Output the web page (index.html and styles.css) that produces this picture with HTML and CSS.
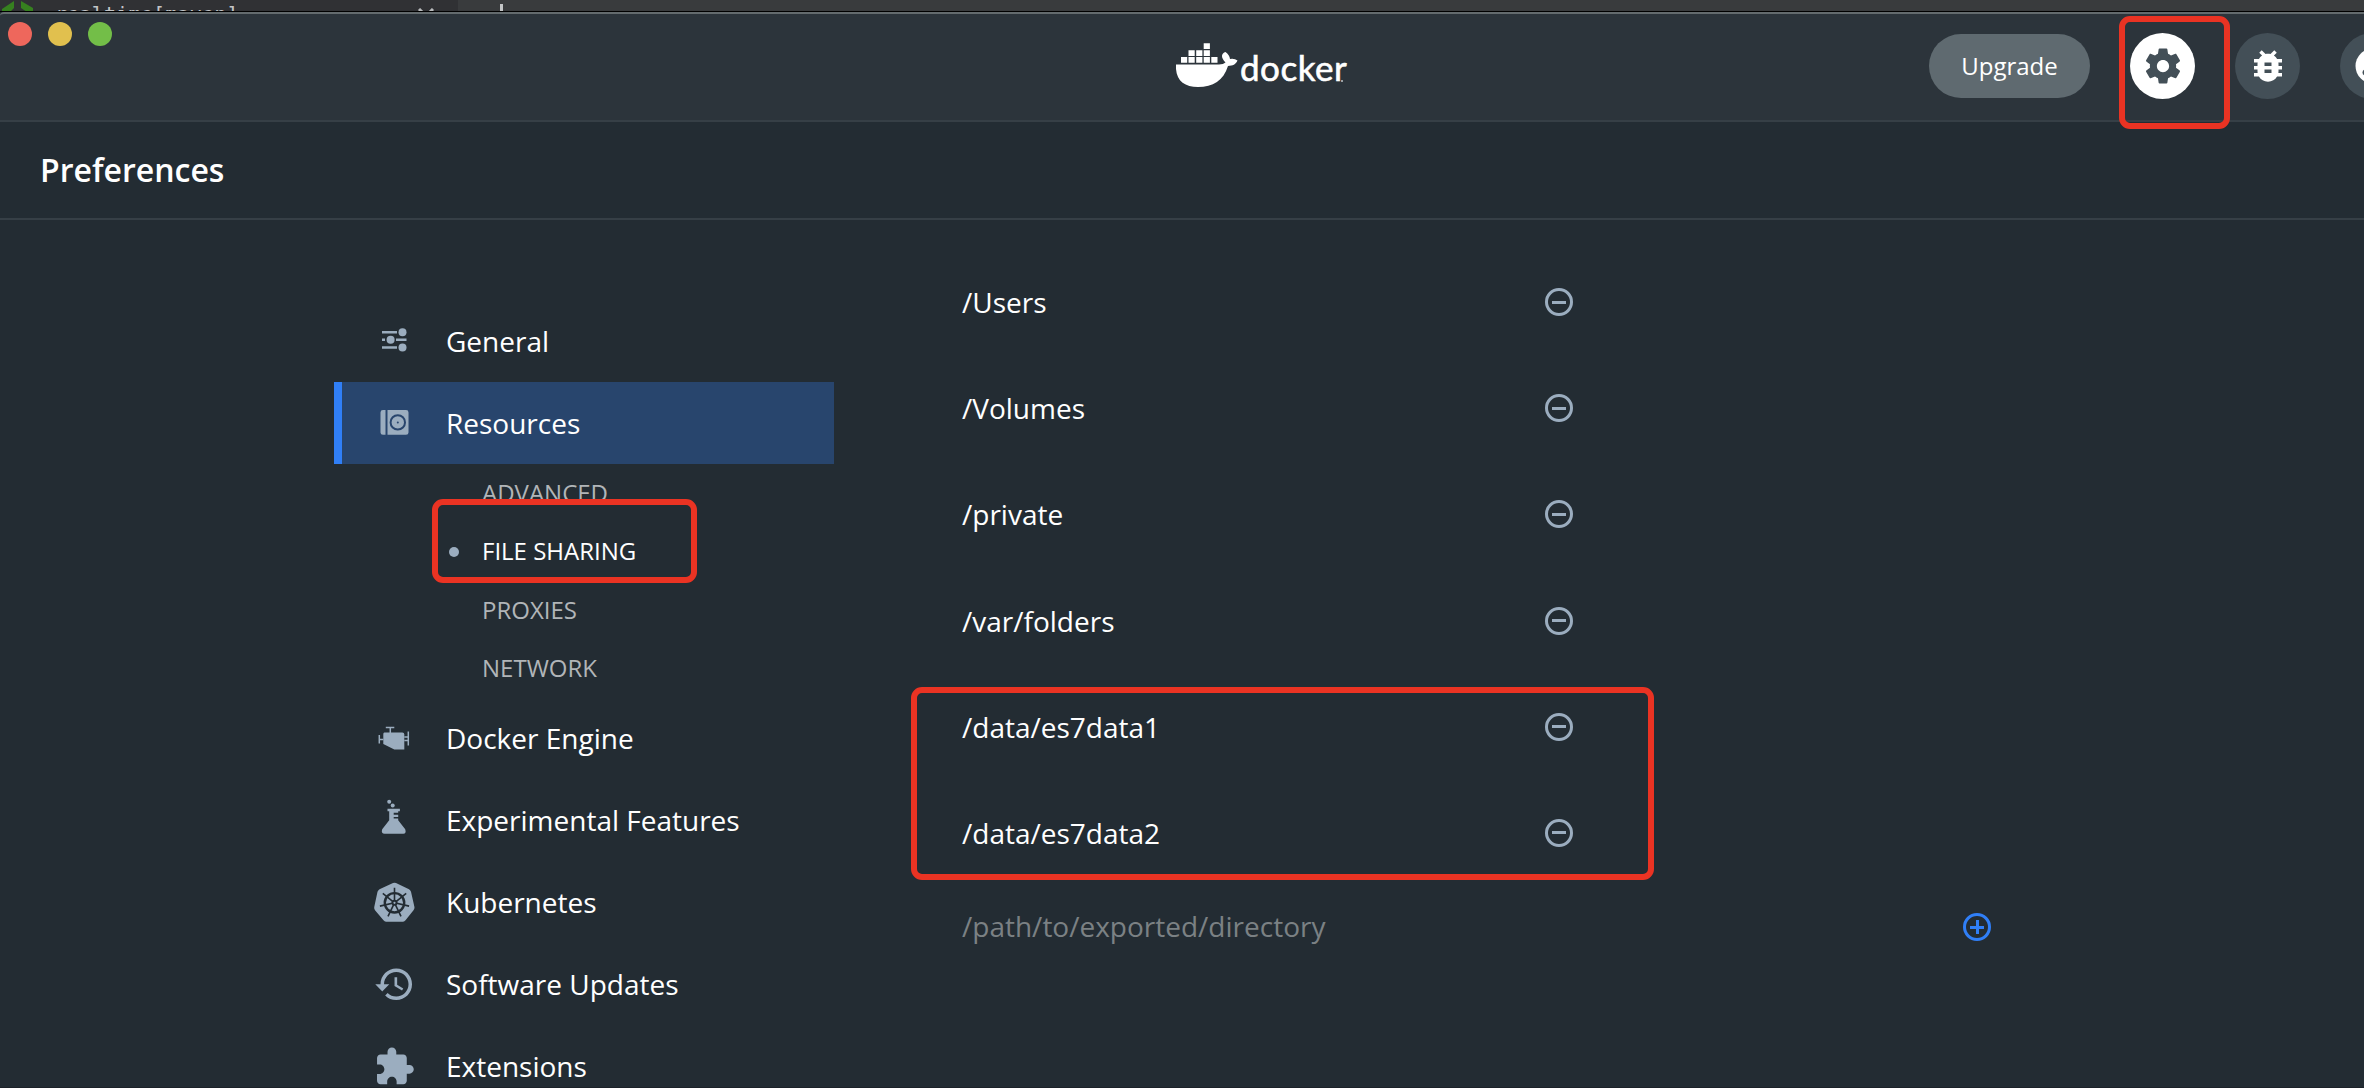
FILE: index.html
```html
<!DOCTYPE html>
<html lang="en">
<head>
<meta charset="utf-8">
<title>Docker Preferences</title>
<link rel="stylesheet" href="styles.css">
</head>
<body>
<div class="screen">
  <div class="backdrop">
    <div class="tab">
      <svg class="tab-leaf" width="34" height="12" viewBox="0 0 34 12"><path d="M1 9 13 1V8L9 12H1zM20 1 32 8V12H26L20 8z" fill="#36801f"/></svg>
      <span class="tab-name">realtime[maven]</span>
      <svg class="tab-close" width="16" height="16" viewBox="0 0 16 16"><path d="M1 1 15 15M15 1 1 15" stroke="#b9bbbd" stroke-width="3"/></svg>
    </div>
    <span class="tab-add"></span>
  </div>
  <header class="titlebar">
    <div class="lights"><i class="light red"></i><i class="light yellow"></i><i class="light green"></i></div>
    <div class="logo">
      <svg class="whale" width="62" height="45" viewBox="0 0 62 45"><g fill="#fff"><path d="M0 21.5H43Q47.500 21.500 49.500 19.500C46 16 45 12.500 47 10.500Q48 9 49.500 9Q53.500 12 54 16Q58.500 15.200 61.500 17.500C59.500 21.500 57 22.800 52 23C47.500 37.500 37 44 22 44C8 44-1 37 0 21.500z"/><path d="M5 14h6.200v5.800H5zM12.500 14h6.200v5.800h-6.200zM20.200 14h6.200v5.800h-6.200zM27.700 14h6.200v5.800h-6.200zM35.300 14h6.200v5.800h-6.200zM12.500 7.200h6.200V13h-6.200zM20.200 7.200h6.200V13h-6.200zM27.700 7.200h6.200V13h-6.200zM27.700.3h6.200V6h-6.200z"/></g></svg>
      <span class="wordmark">docker</span><span class="wordmark-dot"></span>
    </div>
    <div class="actions">
      <button class="upgrade">Upgrade</button>
      <button class="round active"><svg width="42" height="42" viewBox="0 0 24 24"><path fill="#434f57" d="M19.430 12.980c.040-.320.070-.640.070-.980s-.030-.660-.070-.980l2.110-1.650c.190-.150.240-.420.120-.640l-2-3.460c-.120-.220-.390-.300-.610-.220l-2.490 1c-.520-.400-1.080-.730-1.690-.980l-.380-2.650C14.460 2.180 14.250 2 14 2h-4c-.250 0-.460.180-.490.420l-.380 2.650c-.610.250-1.170.590-1.690.980l-2.490-1c-.230-.090-.490 0-.610.220l-2 3.460c-.130.220-.070.490.120.640l2.110 1.650c-.040.320-.070.650-.070.980s.030.660.070.980l-2.110 1.650c-.190.150-.240.420-.120.640l2 3.460c.120.220.390.300.610.220l2.490-1c.520.400 1.080.730 1.690.980l.380 2.650c.030.240.240.420.490.420h4c.250 0 .460-.180.490-.420l.380-2.650c.610-.250 1.170-.590 1.690-.980l2.490 1c.230.090.490 0 .610-.220l2-3.460c.120-.220.070-.490-.120-.640l-2.110-1.650zM12 15.500c-1.930 0-3.500-1.570-3.500-3.500s1.570-3.500 3.500-3.500 3.500 1.570 3.500 3.500-1.570 3.500-3.500 3.500z"/></svg></button>
      <button class="round"><svg width="42" height="42" viewBox="0 0 24 24"><path fill="#fff" d="M20 8h-2.810c-.450-.780-1.070-1.450-1.820-1.960L17 4.410 15.590 3l-2.170 2.170C12.960 5.060 12.490 5 12 5s-.960.060-1.410.170L8.410 3 7 4.410l1.620 1.630C7.880 6.550 7.260 7.220 6.810 8H4v2h2.090c-.050.330-.090.660-.090 1v1H4v2h2v1c0 .340.040.670.090 1H4v2h2.810c1.040 1.790 2.970 3 5.190 3s4.150-1.210 5.190-3H20v-2h-2.090c.050-.330.090-.660.090-1v-1h2v-2h-2v-1c0-.340-.040-.670-.090-1H20V8zm-6 8h-4v-2h4v2zm0-4h-4v-2h4v2z"/></svg></button>
      <button class="round"><svg width="42" height="42" viewBox="0 0 42 42"><circle cx="21" cy="21" r="17.500" fill="#fff"/><circle cx="13.500" cy="27.500" r="3" fill="#434f57"/></svg></button>
    </div>
  </header>
  <h1 class="title">Preferences</h1>
  <main class="content">
    <nav class="nav">
      <a class="item"><svg class="icon" width="42" height="42" viewBox="-2 -.500 42 42"><g fill="#9badbf"><path d="M7 10.500h15v2.600H7zM7 18h3v2.600H7zM21 18h10.500v2.600H21zM7 25.700h15v2.600H7z"/><circle cx="27.500" cy="11.700" r="4"/><circle cx="15.600" cy="19.300" r="4"/><circle cx="27.500" cy="26.900" r="4"/></g></svg><span>General</span></a>
      <a class="item selected"><svg class="icon" width="42" height="42" viewBox="-2 -.400 42 42"><path fill="#9badbf" d="M8 7.700H10.500V32.300H8Q5.500 32.300 5.500 30V10Q5.500 7.700 8 7.700zM12.500 7.700H31Q33.500 7.700 33.500 10V30Q33.500 32.300 31 32.300H12.500z"/><circle cx="22.800" cy="20" r="7.200" fill="none" stroke="#28456d" stroke-width="2"/><circle cx="22.800" cy="20" r="1" fill="#28456d"/></svg><span>Resources</span></a>
      <div class="sub">
        <a>ADVANCED</a>
        <a class="current">FILE SHARING</a>
        <a>PROXIES</a>
        <a>NETWORK</a>
      </div>
      <a class="item"><svg class="icon" width="42" height="42" viewBox="0 0 42 42"><g transform="translate(-1.700 3)"><path fill="#9badbf" d="M13 12.500H31Q33 12.500 33 14.500V29.500H23L12 24V14Q12 12.500 13 12.500z"/><path fill="none" stroke="#9badbf" stroke-width="1.500" d="M14.500 7.500H23M19 7.500V13M8 15V23.500M8 19.500H12M37 11.500V25.500M33 17H37M33 20.500H37"/></g></svg><span>Docker Engine</span></a>
      <a class="item"><svg class="icon" width="42" height="42" viewBox="0 0 42 42"><g fill="#9badbf" transform="translate(-.800 2.700)"><circle cx="17" cy="0" r="2"/><circle cx="20.500" cy="3.800" r="2"/><path d="M15.300 7H27.700V9.600H26V11H21.500V13H26V15.300H21.500V16.800H26V18.500L33 27.500Q34.500 31.800 31 32H12.500Q8.500 31.800 10 27.500L17 18.500V9.600H15.300z"/></g></svg><span>Experimental Features</span></a>
      <a class="item"><svg class="icon" width="42" height="42" viewBox="0 -1.300 42 42"><path fill="#9badbf" d="M20 .800Q21.500.200 23 .800L36 7Q37.600 8 38 9.500L41.500 25Q41.600 26.500 40.500 28L32.500 38Q31.500 39.300 30 39.400H13Q11.500 39.300 10.500 38L2 28Q1 26.500 1.200 25L4.500 9.500Q5 8 6.500 7z"/><g fill="none" stroke="#232c33" stroke-width="2"><circle cx="21.500" cy="20.500" r="9.700" stroke-width="2.400"/><path stroke-width="1.600" d="M21.500 20.500V5.500M21.500 20.500 9.800 11.100M21.500 20.500 33.200 11.100M21.500 20.500 6.900 23.800M21.500 20.500 36.100 23.800M21.500 20.500 15 34M21.500 20.500 28 34"/></g><circle cx="21.500" cy="20.500" r="3" fill="#232c33"/><circle cx="21.500" cy="20.500" r="1.100" fill="#9badbf"/></svg><span>Kubernetes</span></a>
      <a class="item"><svg class="icon" width="42" height="42" viewBox="0 0 24 24"><path transform="translate(.300 .200)" fill="#9badbf" d="M13 3c-4.970 0-9 4.030-9 9H1l3.890 3.890.070.140L9 12H6c0-3.870 3.130-7 7-7s7 3.130 7 7-3.130 7-7 7c-1.930 0-3.680-.790-4.940-2.060l-1.420 1.420C8.270 19.990 10.510 21 13 21c4.970 0 9-4.030 9-9s-4.030-9-9-9zm-1 5v5l4.280 2.540.720-1.210-3.500-2.080V8H12z"/></svg><span>Software Updates</span></a>
      <a class="item"><svg class="icon" width="42" height="42" viewBox="0 0 24 24"><path transform="translate(.300 .400)" fill="#9badbf" d="M20.500 11H19V7c0-1.100-.900-2-2-2h-4V3.500C13 2.120 11.880 1 10.500 1S8 2.120 8 3.500V5H4c-1.100 0-1.990.900-1.990 2v3.800H3.500c1.490 0 2.700 1.210 2.700 2.700s-1.210 2.700-2.700 2.700H2V20c0 1.100.900 2 2 2h3.800v-1.500c0-1.490 1.210-2.700 2.700-2.700 1.490 0 2.700 1.210 2.700 2.700V22H17c1.100 0 2-.900 2-2v-4h1.500c1.380 0 2.500-1.120 2.500-2.500S21.880 11 20.500 11z"/></svg><span>Extensions</span></a>
    </nav>
    <section class="paths">
      <div class="path"><span>/Users</span><i class="minus"></i></div>
      <div class="path"><span>/Volumes</span><i class="minus"></i></div>
      <div class="path"><span>/private</span><i class="minus"></i></div>
      <div class="path"><span>/var/folders</span><i class="minus"></i></div>
      <div class="path"><span>/data/es7data1</span><i class="minus"></i></div>
      <div class="path"><span>/data/es7data2</span><i class="minus"></i></div>
      <div class="path new"><span>/path/to/exported/directory</span><i class="minus plus"></i></div>
    </section>
  </main>
  <div class="mark mark-settings"></div>
  <div class="mark mark-sharing"></div>
  <div class="mark mark-data"></div>
</div>
</body>
</html>
```
FILE: styles.css
```css
* { box-sizing: border-box; }
body { margin: 0; background: #232c33; font-family: "Open Sans", "Noto Sans", sans-serif; color: #fff; }
.screen { position: relative; width: 2364px; height: 1088px; overflow: hidden; display: flex; flex-direction: column; border-bottom: 1px solid #1c2229; }
.backdrop { flex: none; height: 12px; overflow: hidden; display: flex; background: #393b3d; border-bottom: 1px solid #000; }
.tab { flex: none; width: 458px; height: 11px; display: flex; background: #303134; overflow: hidden; }
.tab-leaf { flex: none; margin-left: 1px; }
.tab-name { width: 363px; margin: 3px 0 0 20px; font: 20px/22px "DejaVu Sans Mono", monospace; letter-spacing: 0.2px; color: #c3c5c7; }
.tab-close { flex: none; margin-top: 8px; }
.tab-add { width: 3px; height: 8px; margin: 4px 0 0 42px; background: #c3c5c7; }

.titlebar { flex: none; height: 110px; display: grid; grid-template-columns: 1176px 753px 1fr; background: #2c343b; border-top: 2px solid #646b6e; border-bottom: 2px solid #363f46; border-top-left-radius: 4px; }
.lights { display: flex; gap: 16px; padding: 8px 0 0 8px; }
.light { width: 24px; height: 24px; border-radius: 50%; }
.red { background: #ee675c; }
.yellow { background: #e1c04e; }
.green { background: #73be48; }
.logo { display: flex; padding-top: 29px; }
.whale { flex: none; }
.wordmark { margin: 0 0 0 2px; height: 48px; font: 35px/48px Lato, sans-serif; letter-spacing: 0.5px; -webkit-text-stroke: 0.6px #fff; }
.wordmark-dot { width: 2px; height: 2px; margin: 37px 0 0 -6px; background: #9aa0a4; }
.actions { display: flex; align-items: flex-start; padding-top: 19px; }
.upgrade { flex: none; width: 161px; height: 64px; margin: 1px 40px 0 0; padding: 0 0 1px; border: 0; border-radius: 32px; background: #5f6a70; color: #fff; font: 24px "Open Sans", sans-serif; }
.round { flex: none; width: 65px; height: 66px; margin-right: 40px; padding: 0; border: 0; border-radius: 50%; background: #434f57; display: flex; align-items: center; justify-content: center; }
.active { background: #fff; }

.title { flex: none; margin: 0; height: 98px; padding-left: 40px; border-bottom: 2px solid #363f46; font-size: 32px; font-weight: 600; line-height: 96px; }
.content { flex: none; height: 868px; display: flex; overflow: hidden; }
.nav { flex: none; width: 500px; margin-left: 334px; padding-top: 80px; font-size: 28px; }
.item { height: 82px; display: flex; align-items: center; padding-left: 31px; border-left: 8px solid transparent; white-space: nowrap; }
.icon { flex: none; margin-right: 31px; overflow: visible; }
.selected { background: #28456d; border-left-color: #307ff7; }
.sub { height: 233px; padding: 0 0 0 148px; display: flex; flex-direction: column; color: #b1b5b8; font-size: 24px; }
.sub a { position: relative; height: 58.500px; line-height: 58px; }
.sub .current { color: #fff; }
.current::before { content: ""; position: absolute; left: -33px; top: 25px; width: 10px; height: 10px; border-radius: 50%; background: #9badbf; }
.paths { flex: none; width: 1031px; margin-left: 128px; padding-top: 50px; font-size: 28px; }
.path { width: 611px; height: 106.200px; line-height: 65px; display: flex; justify-content: space-between; }
.new { width: 1029px; margin-top: -14px; line-height: 66px; color: #7b8184; }
.minus { width: 28px; height: 28px; margin-top: 18px; border: 3px solid #9badbf; border-radius: 50%; background: linear-gradient(#9badbf, #9badbf) center / 14px 3px no-repeat; }
.plus { margin-top: 20px; border-color: #307ff7; background: linear-gradient(#307ff7, #307ff7) center / 14px 3px no-repeat, linear-gradient(#307ff7, #307ff7) center / 3px 14px no-repeat; }

.mark { position: absolute; border: 6px solid #ea3323; border-radius: 11px; }
.mark-settings { left: 2119px; top: 16px; width: 111px; height: 113px; }
.mark-sharing { left: 432px; top: 499px; width: 265px; height: 84px; }
.mark-data { left: 911px; top: 687px; width: 743px; height: 193px; }
```
